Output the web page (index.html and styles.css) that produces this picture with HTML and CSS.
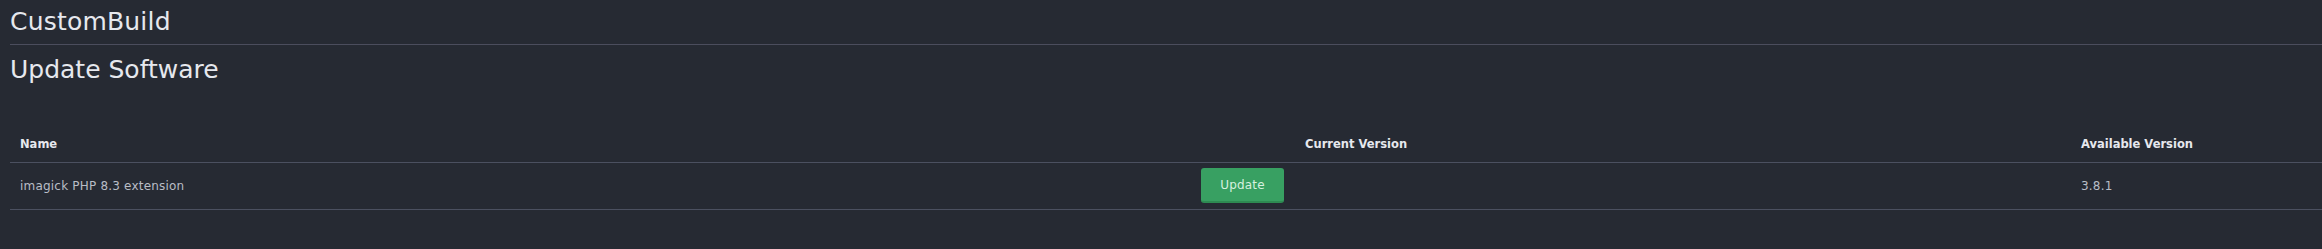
FILE: index.html
```html
<!DOCTYPE html>
<html>
<head>
<meta charset="utf-8">
<link rel="stylesheet" href="styles.css">
</head>
<body>
<div class="page">
  <h1 class="title">CustomBuild</h1>
  <h2 class="subtitle">Update Software</h2>
  <table class="sw-table">
    <colgroup>
      <col class="c-name">
      <col class="c-action">
      <col class="c-current">
      <col class="c-avail">
    </colgroup>
    <thead>
      <tr>
        <th>Name</th>
        <th></th>
        <th>Current Version</th>
        <th>Available Version</th>
      </tr>
    </thead>
    <tbody>
      <tr>
        <td>imagick PHP 8.3 extension</td>
        <td><button class="btn-update">Update</button></td>
        <td></td>
        <td>3.8.1</td>
      </tr>
    </tbody>
  </table>
</div>
</body>
</html>
```

FILE: styles.css
```css
html, body {
  margin: 0;
  padding: 0;
  background: #262a33;
}
body {
  font-family: "DejaVu Sans", "Open Sans", sans-serif;
  color: #e3e6ec;
  height: 249px;
  overflow: hidden;
}
.page {
  padding-left: 10px;
}
.title {
  margin: 0;
  font-weight: 400;
  font-size: 25px;
  letter-spacing: 0.2px;
  line-height: 28px;
  padding-top: 8px;
  padding-bottom: 8px;
  border-bottom: 1px solid #4b4d5d;
  color: #e6e8ee;
}
.subtitle {
  margin: 0;
  font-weight: 400;
  font-size: 25px;
  line-height: 28px;
  padding-top: 11px;
  color: #e6e8ee;
}
.sw-table {
  margin-top: 52px;
  width: 100%;
  border-collapse: collapse;
  table-layout: fixed;
  font-size: 12px;
  letter-spacing: 0.2px;
}
.c-name { width: 1181px; }
.c-action { width: 104px; }
.c-current { width: 776px; }
.sw-table th {
  text-align: left;
  font-weight: 700;
  font-size: 11.5px;
  letter-spacing: 0;
  color: #e6e8ee;
  padding: 0 10px 10px 10px;
  line-height: 16px;
  border-bottom: 1px solid #4b5060;
}
.sw-table td {
  padding: 5px 10px 6px 10px;
  height: 34px;
  color: #b9bdc6;
  border-bottom: 1px solid #4b5060;
  vertical-align: middle;
}
.btn-update {
  font-family: inherit;
  font-size: 12px;
  letter-spacing: 0.2px;
  color: #d6f0df;
  background: #38a062;
  border: none;
  border-bottom: 2px solid #2e8a52;
  border-radius: 3px;
  width: 83px;
  height: 35px;
  padding: 0;
}
```
